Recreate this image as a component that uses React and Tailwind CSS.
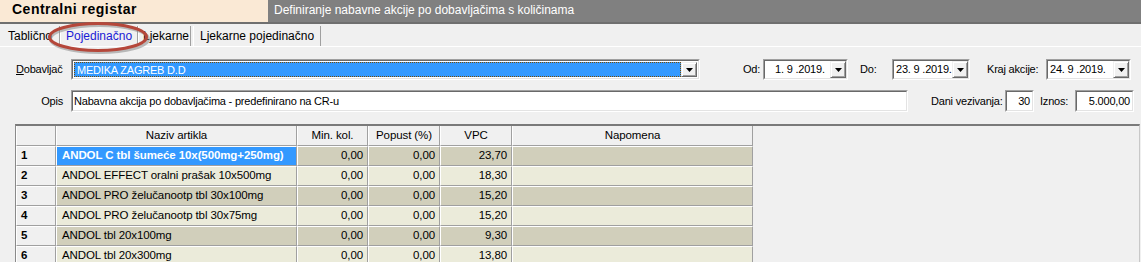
import React from "react";

const Arrow = () => (
  <svg width="7" height="4" viewBox="0 0 7 4"><path d="M0 0h7L3.5 4z" fill="#000" /></svg>
);

const DropBtn = () => (
  <div className="w-[16px] h-full flex items-center justify-center bg-[#f0f0f0] border border-t-[#f0f0f0] border-l-[#f0f0f0] border-b-[#696969] border-r-[#696969] shadow-[inset_1px_1px_0_#ffffff,inset_-1px_-1px_0_#a0a0a0]">
    <Arrow />
  </div>
);

const Sunken = ({ className = "", inner = "", children }) => (
  <div className={`border border-t-[#a0a0a0] border-l-[#a0a0a0] border-b-white border-r-white ${className}`}>
    <div className={`h-full border border-t-[#696969] border-l-[#696969] border-b-[#e3e3e3] border-r-[#e3e3e3] bg-white flex items-center ${inner}`}>
      {children}
    </div>
  </div>
);

const DateBox = ({ w, pl, text }) => (
  <Sunken className={`${w} h-[21px]`} inner="">
    <span className={`flex-1 ${pl} whitespace-nowrap`}>{text}</span>
    <DropBtn />
  </Sunken>
);

const cols = [
  { w: "w-[40px]", key: "n" },
  { w: "w-[241px]", key: "naziv" },
  { w: "w-[71px]", key: "min" },
  { w: "w-[72px]", key: "pop" },
  { w: "w-[72px]", key: "vpc" },
  { w: "w-[241px]", key: "nap" },
];

const rows = [
  ["1", "ANDOL C tbl šumeće 10x(500mg+250mg)", "0,00", "0,00", "23,70"],
  ["2", "ANDOL EFFECT oralni prašak 10x500mg", "0,00", "0,00", "18,30"],
  ["3", "ANDOL PRO želučanootp tbl 30x100mg", "0,00", "0,00", "15,20"],
  ["4", "ANDOL PRO želučanootp tbl 30x75mg", "0,00", "0,00", "15,20"],
  ["5", "ANDOL tbl 20x100mg", "0,00", "0,00", "9,30"],
  ["6", "ANDOL tbl 20x300mg", "0,00", "0,00", "13,80"],
];

export default function App() {
  return (
    <div className="w-[1141px] h-[262px] overflow-hidden bg-[#f0f0f0] relative font-['Liberation_Sans',Arial,sans-serif] text-black">
      {/* Title bar */}
      <div className="flex h-[22px]">
        <div className="w-[268px] bg-[#fae9d5] pl-[12px] pt-[1px] text-[14px] font-bold tracking-[0.5px] leading-[16px]">
          Centralni registar
        </div>
        <div className="flex-1 bg-[#808080] text-white pl-[6px] pt-[3px] text-[12px] leading-[14px]">
          Definiranje nabavne akcije po dobavljačima s količinama
        </div>
      </div>
      <div className="h-[2px] bg-[#6f6f6f]" />

      {/* Tabs */}
      <div className="mt-[2px] h-[21px] flex items-end pl-[4px] border-b border-white text-[12px]">
        <div className="w-[56px] h-[20px] leading-[20px] pl-[4px] border-r border-r-[#a0a0a0]">Tablično</div>
        <div className="w-[78px] h-[20px] leading-[20px] pl-[5px] border-l border-l-white border-r border-r-[#a0a0a0] text-[#1a1ad6]">Pojedinačno</div>
        <div className="w-[53px] h-[20px] leading-[20px] pl-[4px] border-l border-l-white border-r border-r-[#a0a0a0]">Ljekarne</div>
        <div className="ml-[2px] w-[128px] h-[20px] leading-[20px] pl-[6px] border-l border-l-white border-r border-r-[#a0a0a0]">Ljekarne pojedinačno</div>
      </div>

      {/* Row 1 */}
      <div className="mt-[12px] h-[21px] flex items-center text-[11px] tracking-[-0.2px]">
        <div className="w-[71px] pl-[16px]">
          <span className="underline">D</span>obavljač
        </div>
        <Sunken className="w-[629px] h-[21px]" inner="bg-white p-[1px]">
          <div className="flex-1 h-full bg-[#3399ff] border border-dotted border-[#7a4a00] text-white pl-[2px] leading-[15px]">
            MEDIKA ZAGREB D.D
          </div>
          <DropBtn />
        </Sunken>
        <div className="ml-[43px] w-[20px]">Od:</div>
        <DateBox w="w-[85px]" pl="pl-[10px]" text="1. 9 .2019." />
        <div className="ml-[12px] w-[32px]">Do:</div>
        <DateBox w="w-[78px]" pl="pl-[2px]" text="23. 9 .2019." />
        <div className="ml-[17px] w-[59px]">Kraj akcije:</div>
        <DateBox w="w-[85px]" pl="pl-[2px]" text="24. 9 .2019." />
      </div>

      {/* Row 2 */}
      <div className="mt-[10px] h-[22px] flex items-center text-[11px] tracking-[-0.2px]">
        <div className="w-[71px] text-right pr-[8px]">Opis</div>
        <Sunken className="w-[837px] h-[22px]" inner="pl-[1px] tracking-[-0.2px]">
          Nabavna akcija po dobavljačima - predefinirano na CR-u
        </Sunken>
        <div className="ml-[23px] w-[74px]">Dani vezivanja:</div>
        <Sunken className="w-[29px] h-[22px]" inner="justify-end pr-[2px]">30</Sunken>
        <div className="ml-[6px] w-[35px]">Iznos:</div>
        <Sunken className="w-[59px] h-[22px]" inner="justify-end pr-[2px]">5.000,00</Sunken>
      </div>

      {/* Grid */}
      <div className="mt-[12px] ml-[15px] w-[1125px] h-[200px] border-t-2 border-t-[#7a7a7a] border-l border-l-[#8a8a8a] border-r border-r-[#c8c8c8] text-[11.5px] tracking-[-0.1px]">
        {/* header */}
        <div className="flex h-[20px]">
          {["", "Naziv artikla", "Min. kol.", "Popust (%)", "VPC", "Napomena"].map((t, i) => (
            <div
              key={i}
              className={`${cols[i].w} h-[20px] bg-[#f0f0f0] border-r border-r-[#a0a0a0] border-b border-b-[#a0a0a0] border-l border-l-white flex items-center justify-center`}
            >
              {t}
            </div>
          ))}
        </div>
        {rows.map((r, ri) => {
          const bg = ri % 2 === 0 ? "bg-[#d1cfbb]" : "bg-[#ebebda]";
          return (
            <div key={ri} className="flex h-[20px]">
              <div className="w-[40px] h-[20px] bg-[#f0f0f0] border-r border-r-[#a0a0a0] border-b border-b-[#a0a0a0] border-t border-t-white border-l border-l-white flex items-center pl-[4px] font-bold">
                {r[0]}
              </div>
              <div
                className={`w-[241px] h-[20px] border-r border-r-[#a0a0a0] border-b border-b-[#a0a0a0] border-t border-t-white border-l border-l-white flex items-center pl-[5px] whitespace-nowrap ${
                  ri === 0 ? "bg-[#3399ff] text-white font-bold" : bg
                }`}
              >
                {r[1]}
              </div>
              {[2, 3, 4].map((c) => (
                <div
                  key={c}
                  className={`${cols[c].w} h-[20px] ${bg} border-r border-r-[#a0a0a0] border-b border-b-[#a0a0a0] border-t border-t-white border-l border-l-white flex items-center justify-end pr-[4px]`}
                >
                  {r[c]}
                </div>
              ))}
              <div className={`w-[241px] h-[20px] ${bg} border-r border-r-[#a0a0a0] border-b border-b-[#a0a0a0] border-t border-t-white border-l border-l-white`} />
            </div>
          );
        })}
      </div>

      {/* Red ellipse annotation */}
      <svg className="absolute left-[44px] top-[20px]" width="110" height="36" viewBox="0 0 110 36">
        <ellipse cx="55.5" cy="19" rx="49" ry="13.5" fill="none" stroke="#8a8a8a" strokeOpacity="0.55" strokeWidth="3" />
        <ellipse cx="54" cy="17" rx="48.5" ry="13.5" fill="none" stroke="#b5473a" strokeWidth="3" />
      </svg>
    </div>
  );
}
